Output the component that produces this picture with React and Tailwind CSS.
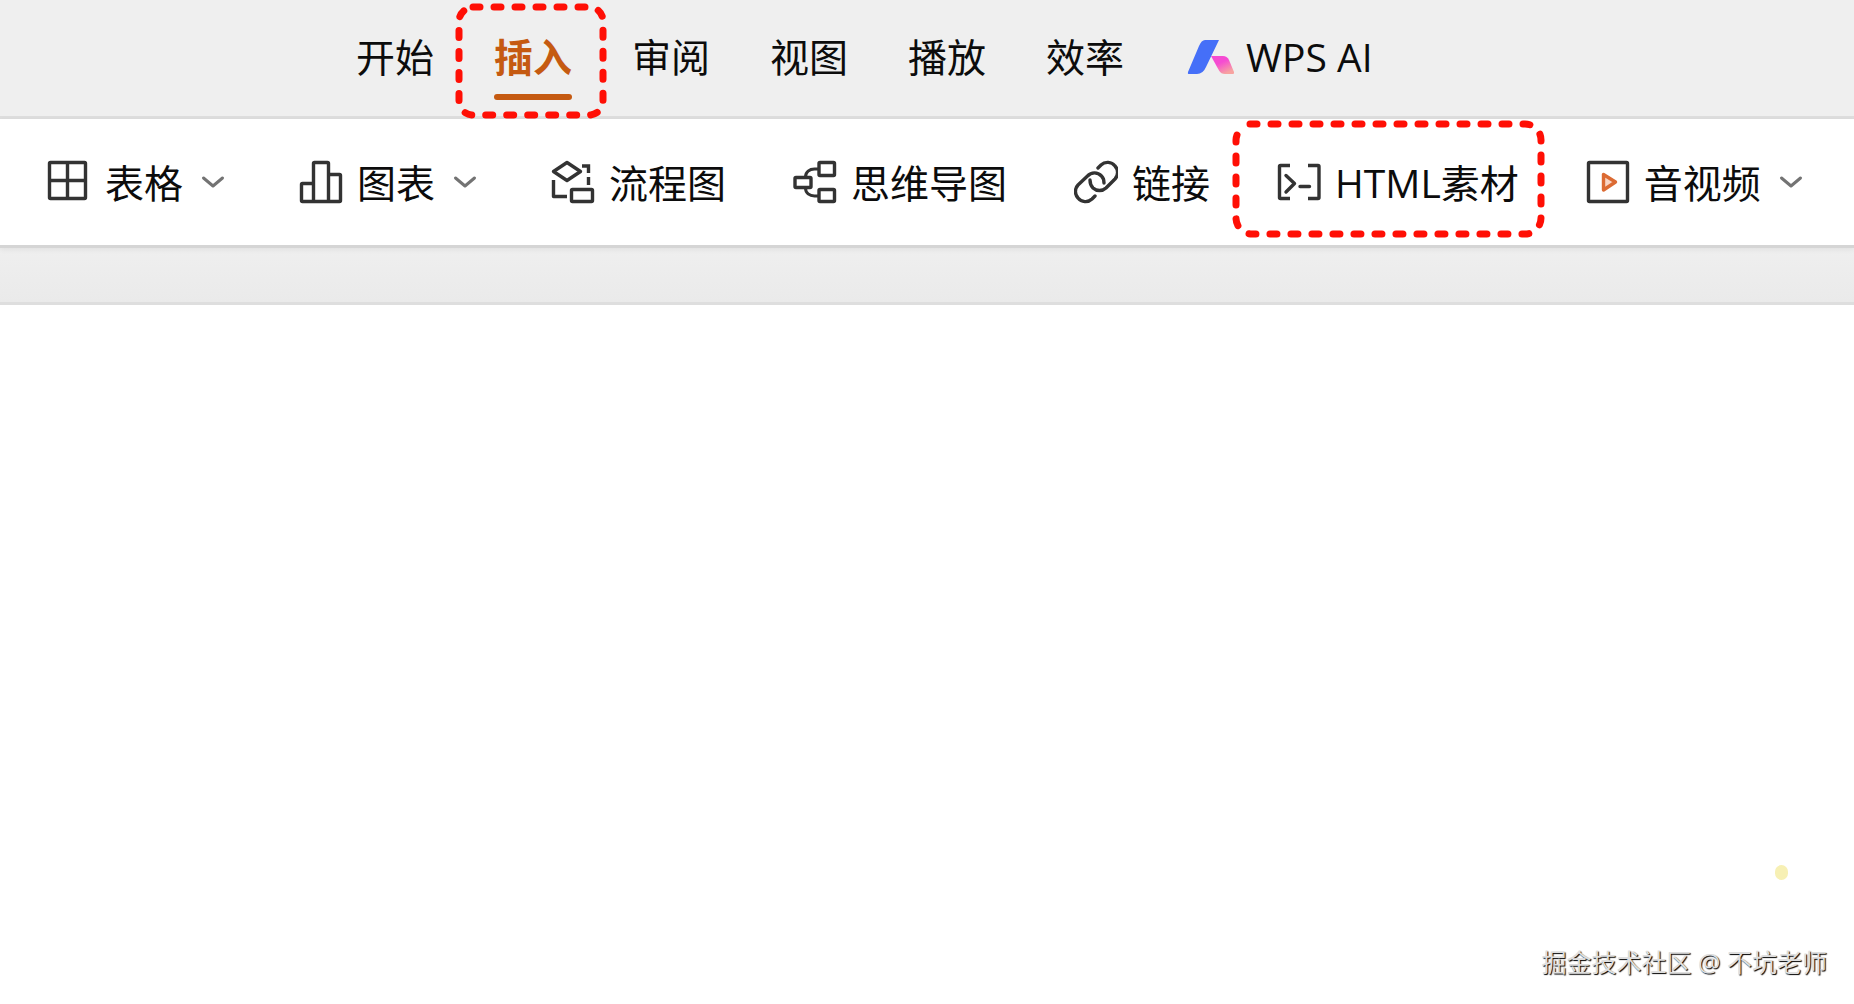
import React from "react";

const tabsBefore = ["开始"];
const tabsAfter = ["审阅", "视图", "播放", "效率"];

const INK = "#333333";

function Icon({ children }) {
  return (
    <svg
      width="44"
      height="44"
      viewBox="0 0 44 44"
      fill="none"
      stroke={INK}
      strokeWidth="3.4"
      strokeLinejoin="round"
      className="shrink-0"
      aria-hidden="true"
    >
      {children}
    </svg>
  );
}

const TableIcon = () => (
  <Icon>
    <rect x="2.5" y="2.5" width="36" height="36" rx="1" />
    <path d="M20.5 2.5v36M2.5 20.5h36" />
  </Icon>
);

const ChartIcon = () => (
  <Icon>
    <path d="M14.5 41.5V3.5a1 1 0 0 1 1-1h13a1 1 0 0 1 1 1v38" />
    <path d="M14.5 23.5h-11a1 1 0 0 0-1 1v16a1 1 0 0 0 1 1h37a1 1 0 0 0 1-1v-25a1 1 0 0 0-1-1h-11" />
  </Icon>
);

const FlowIcon = () => (
  <Icon>
    <path d="M16 2.5L29.5 11.5 16 20.5 2.5 11.5z" />
    <path d="M31 6h6.5v7M37.5 17v8" strokeLinejoin="miter" />
    <path d="M2.5 20v16.5h13.5" />
    <rect x="20.5" y="29.5" width="21" height="12" rx="1" />
  </Icon>
);

const MindIcon = () => (
  <Icon>
    <rect x="26" y="2.5" width="15.5" height="13" rx="1" />
    <rect x="26" y="29.5" width="15.5" height="12" rx="1" />
    <rect x="2" y="17.5" width="16" height="10" rx="1" />
    <path d="M12.500 17c0-5 4-8 9-8h4M12.500 28c0 5 4 8 9 8h4" strokeWidth="3" />
  </Icon>
);

const LinkIcon = () => (
  <Icon>
    <g strokeLinecap="round">
      <path d="M21 36l-3 3a9.5 9.5 0 0 1-14-1 9.5 9.5 0 0 1 0-13L13.5 16a9.5 9.5 0 0 1 14 0q2.5 2.5 2.5 7" />
      <path d="M24 8l3-3a9.5 9.5 0 0 1 14 1 9.5 9.5 0 0 1 0 13L32 28a9.5 9.5 0 0 1-13 0q-3-3-3-8" />
    </g>
  </Icon>
);

const HtmlIcon = () => (
  <Icon>
    <path d="M13 5.5H3.5a1 1 0 0 0-1 1v31a1 1 0 0 0 1 1H13M31 5.5h10a1 1 0 0 1 1 1v31a1 1 0 0 1-1 1H31" />
    <path d="M9 15.5l8.5 8L9 32M23 26.5h9.5" strokeLinecap="round" />
  </Icon>
);

const MediaIcon = () => (
  <Icon>
    <rect x="2.5" y="2.5" width="39" height="39" rx="1" />
    <path d="M17.5 14.5v15.5l12-8z" stroke="#dc6b33" fill="#f8d5c5" />
  </Icon>
);

const Chevron = () => (
  <svg width="24" height="14" viewBox="0 0 24 14" fill="none" className="shrink-0" aria-hidden="true">
    <path
      d="M2.5 3L12 11 21.5 3"
      stroke="#737373"
      strokeWidth="3"
      strokeLinecap="round"
      strokeLinejoin="round"
    />
  </svg>
);

const AiLogo = () => (
  <svg width="54" height="36" viewBox="0 0 54 36" className="shrink-0" aria-hidden="true">
    <defs>
      <linearGradient id="aiPink" x1="0" y1="0" x2="0.6" y2="1">
        <stop offset="0.45" stopColor="#f54bd2" />
        <stop offset="1" stopColor="#f7a3a0" />
      </linearGradient>
    </defs>
    <path d="M21 1h14L22 28q-3 7-9 7H4.5q-1 0-.5-2L15 7q2.5-6 6-6z" fill="#456ff8" />
    <path d="M27 17h12q4 0 6 4l5 12q.5 2-1 2h-8q-4 0-6-3.5z" fill="url(#aiPink)" />
  </svg>
);

const tools = [
  { label: "表格", icon: TableIcon, menu: true },
  { label: "图表", icon: ChartIcon, menu: true },
  { label: "流程图", icon: FlowIcon },
  { label: "思维导图", icon: MindIcon },
  { label: "链接", icon: LinkIcon },
  { label: "HTML素材", icon: HtmlIcon, marked: true },
  { label: "音视频", icon: MediaIcon, menu: true },
];

function Tab({ label }) {
  return (
    <button type="button" role="tab" aria-selected="false" className="whitespace-nowrap">
      {label}
    </button>
  );
}

export default function App() {
  return (
    <div className="flex min-h-screen flex-col bg-white font-['Open_Sans','Noto_Sans_CJK_SC',sans-serif] text-[39px] leading-[48px] font-normal text-[#0c0c0c]">
      <nav
        role="tablist"
        className="flex h-[119px] items-center gap-[60px] border-b-3 border-[#dddddd] bg-[#efefef] pb-[2px] pl-[356px]"
      >
        {tabsBefore.map((t) => (
          <Tab key={t} label={t} />
        ))}
        <button
          type="button"
          role="tab"
          aria-selected="true"
          className="relative font-bold whitespace-nowrap text-[#c55a11]"
        >
          插入
          <span className="absolute inset-x-0 top-[61px] h-[6px] rounded-full bg-[#c55a11]" />
          <svg
            width="152"
            height="116"
            viewBox="0 0 152 116"
            fill="none"
            className="pointer-events-none absolute -top-[30px] -left-[39px] max-w-none"
            aria-hidden="true"
          >
            <path
              d="M18 4H134a14 14 0 0 1 14 14V98a14 14 0 0 1-14 14H18a14 14 0 0 1-14-14V18a14 14 0 0 1 10-13"
              stroke="#ff0f05"
              strokeWidth="7"
              strokeLinecap="round"
              strokeDasharray="7 14"
            />
          </svg>
        </button>
        {tabsAfter.map((t) => (
          <Tab key={t} label={t} />
        ))}
        <button type="button" role="tab" aria-selected="false" className="flex items-center gap-2 whitespace-nowrap">
          <AiLogo />
          WPS AI
        </button>
      </nav>

      <div
        role="toolbar"
        className="z-10 flex h-[129px] items-center gap-[67px] border-b-3 border-[#d5d5d5] bg-white pl-[47px] shadow-[0_2px_5px_rgba(0,0,0,0.06)]"
      >
        {tools.map(({ label, icon: Glyph, menu, marked }) => (
          <button
            key={label}
            type="button"
            className={
              menu
                ? "relative flex shrink-0 items-center whitespace-nowrap pr-[7px]"
                : "relative flex shrink-0 items-center whitespace-nowrap"
            }
          >
            <Glyph />
            <span className="ml-[14px] pt-[2px]">{label}</span>
            {menu && (
              <span className="ml-[18px]">
                <Chevron />
              </span>
            )}
            {marked && (
              <svg
                width="314"
                height="118"
                viewBox="0 0 314 118"
                fill="none"
                className="pointer-events-none absolute -top-[37px] -left-[45px] max-w-none"
                aria-hidden="true"
              >
                <path
                  d="M18 4H293a16 16 0 0 1 16 16V98a16 16 0 0 1-16 16H20a16 16 0 0 1-16-16V20a16 16 0 0 1 4-10"
                  stroke="#ff0f05"
                  strokeWidth="7"
                  strokeLinecap="round"
                  strokeDasharray="7 14"
                />
              </svg>
            )}
          </button>
        ))}
      </div>

      <div className="h-[57px] border-b-3 border-[#dedede] bg-linear-to-b from-[#efefef] to-[#eaeaea]" />

      <main className="flex grow flex-col items-end justify-end pr-[27px] pb-[24px]">
        <span className="mr-[39px] mb-[64px] h-[15px] w-[13px] rounded-full bg-[#f7f0b4]" />
        <p className="text-[25px] leading-[36px] text-[#dedede] [text-shadow:1px_1px_1px_#000]">
          掘金技术社区 @ 不坑老师
        </p>
      </main>
    </div>
  );
}
